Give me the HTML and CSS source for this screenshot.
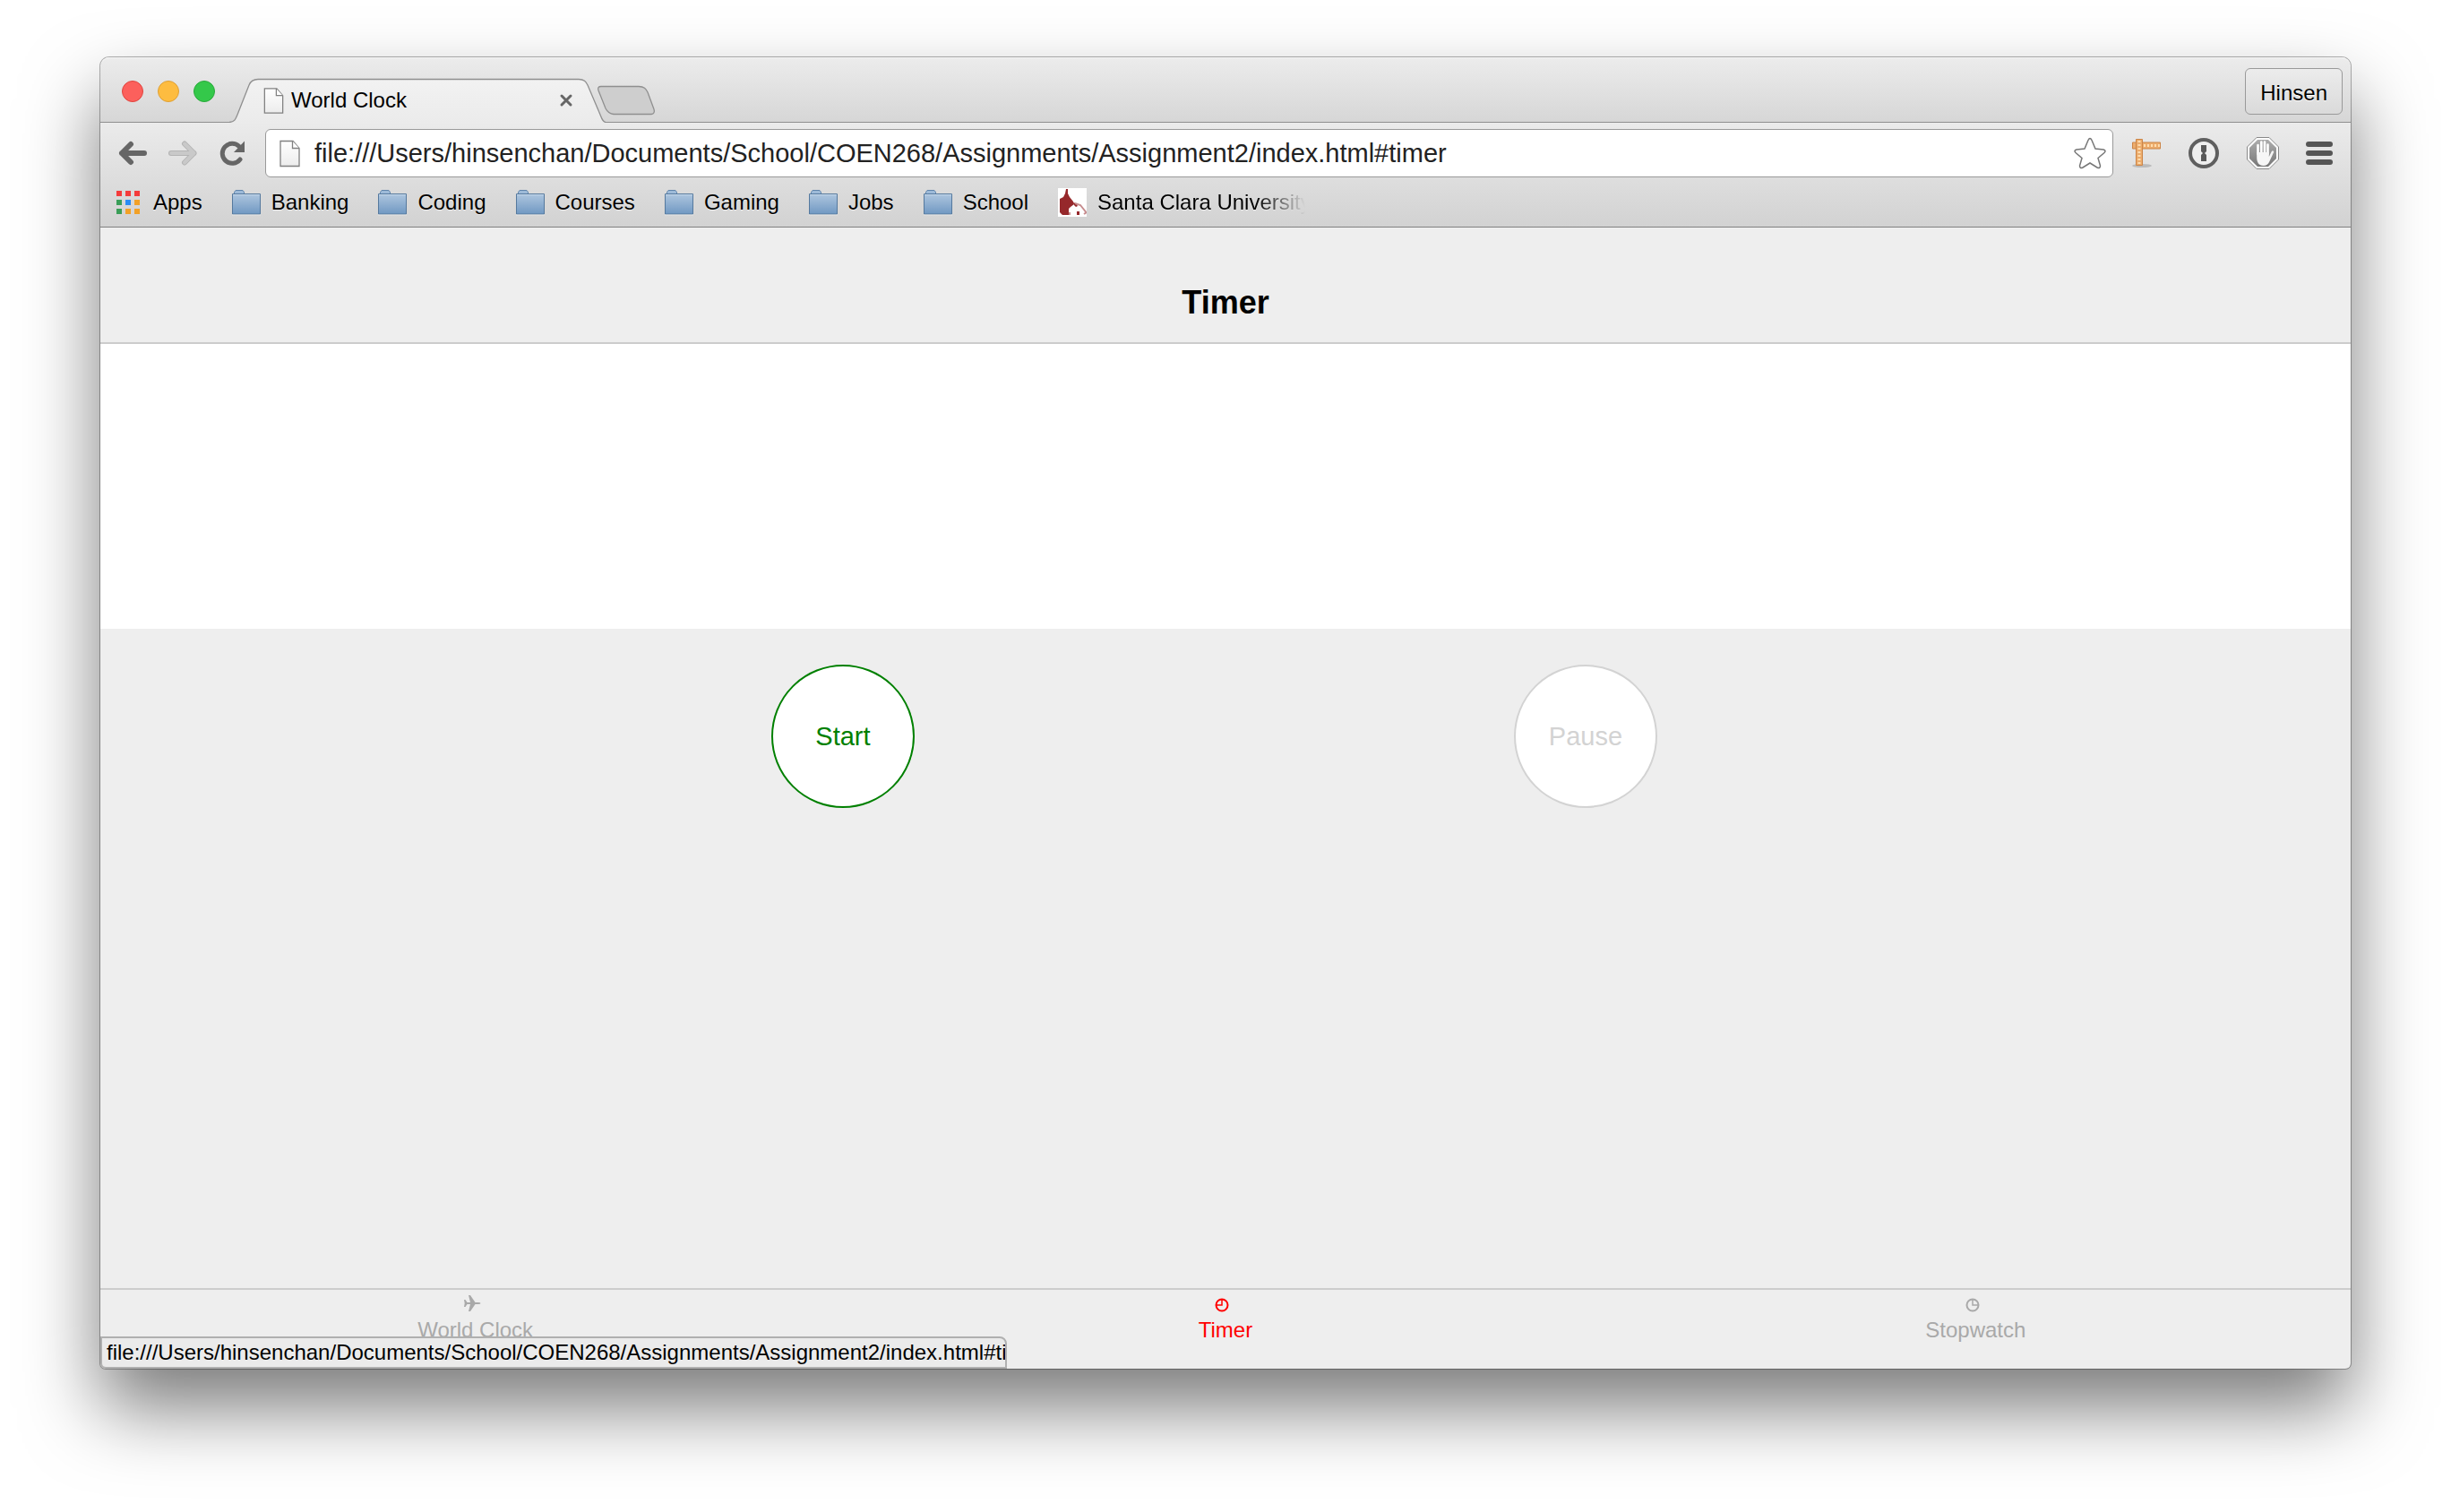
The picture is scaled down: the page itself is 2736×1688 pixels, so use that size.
FILE: index.html
```html
<!DOCTYPE html>
<html lang="en">
<head>
<meta charset="utf-8">
<title>World Clock</title>
<link rel="stylesheet" href="styles.css">
</head>
<body>
<svg class="defs" width="0" height="0" aria-hidden="true">
  <defs>
    <linearGradient id="tabFill" x1="0" y1="0" x2="0" y2="1"><stop offset="0" stop-color="#f2f2f2"/><stop offset="1" stop-color="#ebebeb"/></linearGradient>
    <linearGradient id="folderFill" x1="0" y1="0" x2="0" y2="1"><stop offset="0" stop-color="#aec6df"/><stop offset="1" stop-color="#7098c2"/></linearGradient>
    <linearGradient id="pageFill" x1="0" y1="0" x2="0" y2="1"><stop offset="0" stop-color="#fff"/><stop offset="1" stop-color="#ececec"/></linearGradient>
    <linearGradient id="signFill" x1="0" y1="0" x2="0" y2="1"><stop offset="0" stop-color="#adadad"/><stop offset="1" stop-color="#777"/></linearGradient>
    <symbol id="folder" viewBox="0 0 32 29">
      <path d="M2.500 5V2.500l1.500-2h8l1.500 2V5" fill="#9dbad8" stroke="#6085ab"/>
      <path d="M.5 4.500h31v22.500H.5z" fill="url(#folderFill)" stroke="#55799e"/>
      <path d="M1 5.500h30" stroke="#c6d8ea"/><path d="M0 28h32" stroke="#f0f0f0" stroke-opacity=".7"/>
    </symbol>
    <symbol id="page" viewBox="0 0 23 30">
      <path d="M1 1h14l7 8v20H1z" fill="url(#pageFill)" stroke="#808080" stroke-width="1.300"/>
      <path d="M14.500 1v8H22" fill="#fff" stroke="#808080" stroke-width="1.300"/>
    </symbol>
  </defs>
</svg>
<div class="window">
  <header class="strip">
    <div class="lights">
      <button class="light red" aria-label="Close window"></button>
      <button class="light amber" aria-label="Minimize window"></button>
      <button class="light green" aria-label="Zoom window"></button>
    </div>
    <div class="tab">
      <svg class="tab-shape" width="420" height="50" viewBox="0 0 420 50" aria-hidden="true">
        <path d="M0 50v-.5C6 49 7 46 9 41L22 8C24 3 27 1.500 32 1.500H390C396 1.500 398 4 400 8L414 41C416 46 417 49 420 49.500V50z" fill="url(#tabFill)"/>
        <path d="M0 49.500C6 49 7 46 9 41L22 8C24 3 27 1.500 32 1.500H390C396 1.500 398 4 400 8L414 41C416 46 417 49 420 49.500" fill="none" stroke="#8f8f8f" stroke-width="1.300"/>
      </svg>
      <div class="tab-content">
        <svg width="23" height="29" aria-hidden="true"><use href="#page" width="23" height="29"/></svg>
        <span class="tab-title">World Clock</span>
        <button class="plain" aria-label="Close tab"><svg width="16" height="16" viewBox="0 0 16 16"><path d="M3 3l10 10M13 3l-10 10" stroke="#666" stroke-width="3" stroke-linecap="round"/></svg></button>
      </div>
    </div>
    <button class="plain new-tab" aria-label="New tab"><svg width="66" height="34" viewBox="0 0 66 34"><path d="M5 1.500H47C53 1.500 55 4 57 8L64 27C65 30 64 32 61 32.500H19C14 32 12 30 10 26L2 6C1 3 2 1.500 5 1.500z" fill="#cecece" stroke="#8f8f8f" stroke-width="1.300"/></svg></button>
    <button class="profile">Hinsen</button>
  </header>

  <div class="chrome">
    <div class="toolbar">
      <nav class="nav">
        <button class="plain" aria-label="Back"><svg width="32" height="30" viewBox="0 0 32 30"><path d="M4 15H29M14 5L4 15 14 25" fill="none" stroke="#666" stroke-width="6" stroke-linecap="round" stroke-linejoin="round"/></svg></button>
        <button class="plain" aria-label="Forward" disabled><svg width="32" height="30" viewBox="0 0 32 30"><path d="M3 15H28.500M18 4.500L28.500 15 18 25.500" fill="none" stroke="#b4b4b4" stroke-width="6" stroke-linecap="round" stroke-linejoin="round"/><path d="M3 15H28.500M18 4.500L28.500 15 18 25.500" fill="none" stroke="#c9c9c9" stroke-width="4" stroke-linecap="round" stroke-linejoin="round"/></svg></button>
        <button class="plain" aria-label="Reload"><svg width="30" height="30" viewBox="0 0 30 30"><path d="M24 22A11 11 0 1 1 23 7.500" fill="none" stroke="#666" stroke-width="5" stroke-linecap="round"/><path d="M29 1.500V14H17z" fill="#666"/></svg></button>
      </nav>
      <div class="omnibox">
        <svg width="23" height="31" aria-hidden="true"><use href="#page" width="23" height="31"/></svg>
        <input class="address" type="text" aria-label="Address" value="file:///Users/hinsenchan/Documents/School/COEN268/Assignments/Assignment2/index.html#timer">
        <button class="plain" aria-label="Bookmark this page"><svg width="38" height="38" viewBox="0 0 38 38"><path d="M17 4.500Q19 .5 21 4.500L25 14 34 15Q37.500 16 35 18.500L28 24.500 30.500 33Q30.500 36.500 27 35L19 30 11 35Q7.500 36.500 7.500 33L10 24.500 3 18.500Q.5 16 4 15L13 14z" fill="#fff" stroke="#777" stroke-width="1.500"/></svg></button>
      </div>
      <div class="extensions">
        <button class="plain" aria-label="Page Ruler"><svg width="34" height="34" viewBox="0 0 34 34"><ellipse cx="12" cy="31" rx="11" ry="2" fill="#bbb"/><path d="M1.500 5h31v7h-31z" fill="#ecac6c" stroke="#cc8547"/><path d="M5.500 1.500h7v29h-7z" fill="#ecac6c" stroke="#cc8547"/><path d="M14 8.500h18" stroke="#ffdcae" stroke-width="3" stroke-dasharray="2 2"/><path d="M9 3v26" stroke="#ffdcae" stroke-width="3" stroke-dasharray="2 2"/></svg></button>
        <button class="plain" aria-label="1Password"><svg width="36" height="36" viewBox="0 0 36 36"><circle cx="18" cy="18" r="15" fill="#eee" stroke="#5f5f5f" stroke-width="4"/><path d="M15 9h6v7l-2 2 2 2v7h-6v-7l2-2-2-2z" fill="#595959"/></svg></button>
        <button class="plain" aria-label="AdBlock"><svg width="38" height="38" viewBox="0 0 38 38"><path d="M12 1.500h14L36.500 12v14L26 36.500H12L1.500 26V12z" fill="#fff" stroke="#888"/><path d="M13 4h12l9 9v12l-9 9H13l-9-9V13z" fill="url(#signFill)"/><path d="M13.500 20V10M17.300 18V6.500M21 18V6.500M24.500 20V9.500" stroke="#fff" stroke-width="2.600" stroke-linecap="round"/><path d="M12.200 18h13.600v5l3-6c1-1.500 2.800-.5 2.300 1L26.500 28c-1.500 3.500-3.500 5-7 5-5 0-7.300-4-7.300-9z" fill="#f6f6f6"/></svg></button>
        <button class="plain" aria-label="Menu"><svg width="30" height="28" viewBox="0 0 30 28"><path d="M3 4h24M3 14h24M3 24h24" stroke="#555" stroke-width="6" stroke-linecap="round"/></svg></button>
      </div>
    </div>
    <nav class="bookmarks" aria-label="Bookmarks">
      <a class="bookmark" href="#apps"><svg width="28" height="27" viewBox="0 0 28 27" aria-hidden="true"><path d="M0 0h6v6H0zM10 0h6v6h-6zM20 0h6v6h-6z" fill="#f43b3b"/><path d="M0 10h6v6H0zM0 20h6v6H0z" fill="#3a9e58"/><path d="M10 10h6v6h-6z" fill="#2a8cf4"/><path d="M20 10h6v6h-6zM10 20h6v6h-6zM20 20h6v6h-6z" fill="#f2a127"/></svg>Apps</a>
      <a class="bookmark" href="#banking"><svg width="32" height="29" aria-hidden="true"><use href="#folder"/></svg>Banking</a>
      <a class="bookmark" href="#coding"><svg width="32" height="29" aria-hidden="true"><use href="#folder"/></svg>Coding</a>
      <a class="bookmark" href="#courses"><svg width="32" height="29" aria-hidden="true"><use href="#folder"/></svg>Courses</a>
      <a class="bookmark" href="#gaming"><svg width="32" height="29" aria-hidden="true"><use href="#folder"/></svg>Gaming</a>
      <a class="bookmark" href="#jobs"><svg width="32" height="29" aria-hidden="true"><use href="#folder"/></svg>Jobs</a>
      <a class="bookmark" href="#school"><svg width="32" height="29" aria-hidden="true"><use href="#folder"/></svg>School</a>
      <a class="bookmark" href="#scu"><svg width="32" height="32" viewBox="0 0 32 32" aria-hidden="true"><path d="M0 0h32v32H0z" fill="#fff"/><path d="M9 1h2v5l2 4 4 5 1 3-4 3-2 2v7H5l-3-3V12l4-2 2-4z" fill="#96282b"/><path d="M17 16l3 1 2 3-2 1-2-2zM21 26h3v4h-3z" fill="#96282b"/><path d="M19 17l6 2 4 5 3 4M13 27v3M29 29l3-2" stroke="#c78c8e" stroke-width="2" fill="none"/></svg><span class="fade">Santa Clara University</span></a>
    </nav>
  </div>

  <div class="app">
    <header class="app-header"><h1>Timer</h1></header>
    <section class="display" aria-label="Remaining time"></section>
    <main class="controls">
      <button class="round start">Start</button>
      <button class="round" disabled>Pause</button>
    </main>
    <nav class="tabs">
      <a href="#worldclock"><svg width="20" height="20" viewBox="0 0 20 20" aria-hidden="true"><path d="M1 6h1.500l2 3H8L6 1h2l5.500 8H17q2.500 0 2.500 1T17 11h-3.500L8 19H6l2-8H4.500l-2 3H1l.7-4z" fill="currentColor"/></svg><span>World Clock</span></a>
      <a class="active" href="#timer"><svg width="20" height="20" viewBox="0 0 20 20" aria-hidden="true"><circle cx="10" cy="12" r="6.500" fill="none" stroke="currentColor" stroke-width="2"/><path d="M10 5v7H4" fill="none" stroke="currentColor" stroke-width="1.500"/></svg><span>Timer</span></a>
      <a href="#stopwatch"><svg width="20" height="20" viewBox="0 0 20 20" aria-hidden="true"><circle cx="10" cy="12" r="6.500" fill="none" stroke="currentColor" stroke-width="2"/><path d="M10 5v7h6" fill="none" stroke="currentColor" stroke-width="1.500"/></svg><span>Stopwatch</span></a>
    </nav>
  </div>
  <div class="status">file:///Users/hinsenchan/Documents/School/COEN268/Assignments/Assignment2/index.html#timer</div>
</div>
</body>
</html>
```
FILE: styles.css
```css
* { box-sizing: border-box; }

body {
  margin: 0;
  min-height: 100vh;
  padding: 64px 112px 160px;
  display: flex;
  background: #fff;
  color: #000;
  font: 24px/32px "Liberation Sans", Arial, sans-serif;
}

a { color: inherit; text-decoration: none; }
button { font: inherit; color: inherit; }
svg { display: block; flex: none; }
.defs { position: absolute; }

.plain { padding: 0; border: 0; background: none; }

.window {
  position: relative;
  flex: 1;
  min-width: 0;
  display: flex;
  flex-direction: column;
  border-radius: 10px 10px 6px 6px;
  background: #eee;
  box-shadow: 0 0 0 1px rgba(0, 0, 0, .3), 0 44px 84px rgba(0, 0, 0, .52);
}

/* Title strip */
.strip {
  height: 73px;
  display: flex;
  align-items: flex-end;
  padding: 0 9px 0 24px;
  border-radius: 10px 10px 0 0;
  background: linear-gradient(#ececec, #d6d6d6);
  box-shadow: inset 0 -1px #8f8f8f, inset 0 1px #f6f6f6;
}
.lights { display: flex; gap: 16px; align-self: flex-start; padding-top: 26px; }
.light { width: 24px; height: 24px; padding: 0; border: 1px solid; border-radius: 50%; }
.red { background: #fc605c; border-color: #e0443e; }
.amber { background: #fdbc40; border-color: #dea035; }
.green { background: #34c84a; border-color: #28a93a; }

.tab { display: grid; margin-left: 16px; }
.tab-shape, .tab-content { grid-area: 1 / 1; }
.tab-content { display: flex; align-items: center; gap: 8px; padding: 0 36px 0 38px; }
.tab-title { flex: 1; }
.new-tab { margin: 0 auto 8px -10px; }
.profile {
  height: 52px;
  margin-bottom: 9px;
  padding: 3px 16px 0;
  border: 1px solid #999;
  border-radius: 6px;
  background: linear-gradient(#ececec, #dadada);
  text-shadow: 0 1px #fff;
}

/* Toolbar and bookmarks */
.chrome {
  height: 117px;
  background: linear-gradient(#ebebeb, #d2d2d2);
  border-bottom: 1px solid #808080;
}
.toolbar { display: flex; align-items: center; padding: 7px 20px 0; }
.nav { display: flex; gap: 24px; }
.omnibox {
  flex: 1;
  min-width: 0;
  height: 54px;
  margin: 0 20px 0 22px;
  padding: 0 6px 0 15px;
  display: flex;
  align-items: center;
  gap: 16px;
  border: 1px solid #999;
  border-radius: 6px;
  background: #fff;
}
.address {
  flex: 1;
  min-width: 0;
  padding: 0;
  border: 0;
  background: none;
  color: #222;
  font: 29px/40px "Liberation Sans", Arial, sans-serif;
  outline: 0;
}
.extensions { display: flex; align-items: center; gap: 29px; }

.bookmarks { display: flex; gap: 33px; padding: 12px 18px 0; }
.bookmark { height: 32px; display: flex; align-items: center; gap: 12px; text-shadow: 0 1px rgba(255, 255, 255, .6); }
.bookmark:first-child { gap: 13px; }
.fade {
  width: 232px;
  overflow: hidden;
  white-space: nowrap;
  -webkit-mask-image: linear-gradient(90deg, #000 76%, transparent);
  mask-image: linear-gradient(90deg, #000 76%, transparent);
}

/* Timer page */
.app { flex: 1; display: flex; flex-direction: column; }
.app-header { height: 130px; padding-top: 62px; border-bottom: 2px solid #ccc; text-align: center; }
h1 { margin: 0; font-size: 36px; line-height: 44px; }
.display { height: 318px; background: #fff; }
.controls {
  flex: 1;
  display: grid;
  grid-template-columns: 1fr 1fr;
  align-content: start;
  justify-items: center;
  padding: 40px 17.5% 0 16.5%;
}
.round {
  width: 160px;
  height: 160px;
  padding: 0;
  border: 2px solid #d3d3d3;
  border-radius: 50%;
  background: #fff;
  color: #d3d3d3;
  font-size: 29px;
}
.start { border-color: green; color: green; }

.tabs { height: 90px; display: grid; grid-template-columns: repeat(3, 1fr); border-top: 2px solid #ccc; color: #a9a9a9; }
.tabs a { display: flex; flex-direction: column; align-items: center; padding-top: 5px; line-height: 40px; }
.tabs svg { margin-right: 7px; }
.tabs .active { color: red; }

/* Link target bubble laid over the page */
.status {
  position: absolute;
  left: 0;
  bottom: 0;
  width: 1012px;
  height: 36px;
  padding-left: 5px;
  overflow: hidden;
  border: 2px solid #b0b0b0;
  border-radius: 0 8px 0 6px;
  background: #ebebeb;
  white-space: nowrap;
}
```
